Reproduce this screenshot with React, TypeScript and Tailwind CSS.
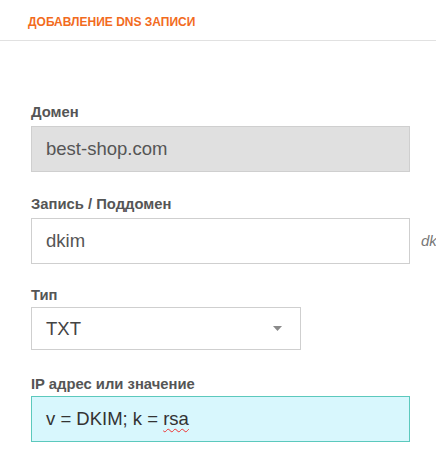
import React from "react";

const font = { fontFamily: '"Liberation Sans", Arial, sans-serif' };

function Label({ children }: { children: React.ReactNode }) {
  return (
    <div className="text-[14.8px] leading-[18px] font-bold text-[#555]">{children}</div>
  );
}

export default function App() {
  return (
    <div className="w-[436px] h-[457px] bg-white overflow-hidden" style={font}>
      <div className="h-[41px] border-b border-[#e1e1e1] flex items-center pl-[28px] pt-[3px]">
        <span className="text-[12px] font-bold text-[#f26b1d] uppercase">
          Добавление DNS записи
        </span>
      </div>
      <div className="pl-[31px] pt-[62px] flex flex-col">
        <Label>Домен</Label>
        <div className="mt-[5px] w-[379px] h-[46px] bg-[#e0e0e0] border border-[#cfcfcf] flex items-center pl-[14px] text-[18.5px] text-[#555]">
          best-shop.com
        </div>

        <div className="mt-[23px]">
          <Label>Запись / Поддомен</Label>
        </div>
        <div className="mt-[5px] flex items-center gap-[11px]">
          <div className="w-[379px] h-[46px] shrink-0 bg-white border border-[#cfcfcf] flex items-center pl-[14px] text-[18.5px] text-[#555]">
            dkim
          </div>
          <span className="text-[15px] italic text-[#777] whitespace-nowrap">dkim.best-shop.com</span>
        </div>

        <div className="mt-[22px]">
          <Label>Тип</Label>
        </div>
        <div className="mt-[3px] w-[270px] h-[43px] bg-white border border-[#cfcfcf] flex items-center justify-between pl-[14px] pr-[18px] text-[18.5px] text-[#444]">
          <span>TXT</span>
          <svg width="9" height="5" viewBox="0 0 9 5">
            <path d="M0 0 L9 0 L4.5 5 Z" fill="#8a8a8a" />
          </svg>
        </div>

        <div className="mt-[25px]">
          <Label>IP адрес или значение</Label>
        </div>
        <div className="mt-[3px] w-[379px] h-[46px] bg-[#d8f7fd] border border-[#5cc9bd] flex items-center pl-[14px] text-[18.5px] text-[#333]">
          <span className="whitespace-pre">v = DKIM; k = </span>
          <span className="underline decoration-wavy decoration-[#e33] decoration-[1px] underline-offset-[3px]">rsa</span>
        </div>
      </div>
    </div>
  );
}
